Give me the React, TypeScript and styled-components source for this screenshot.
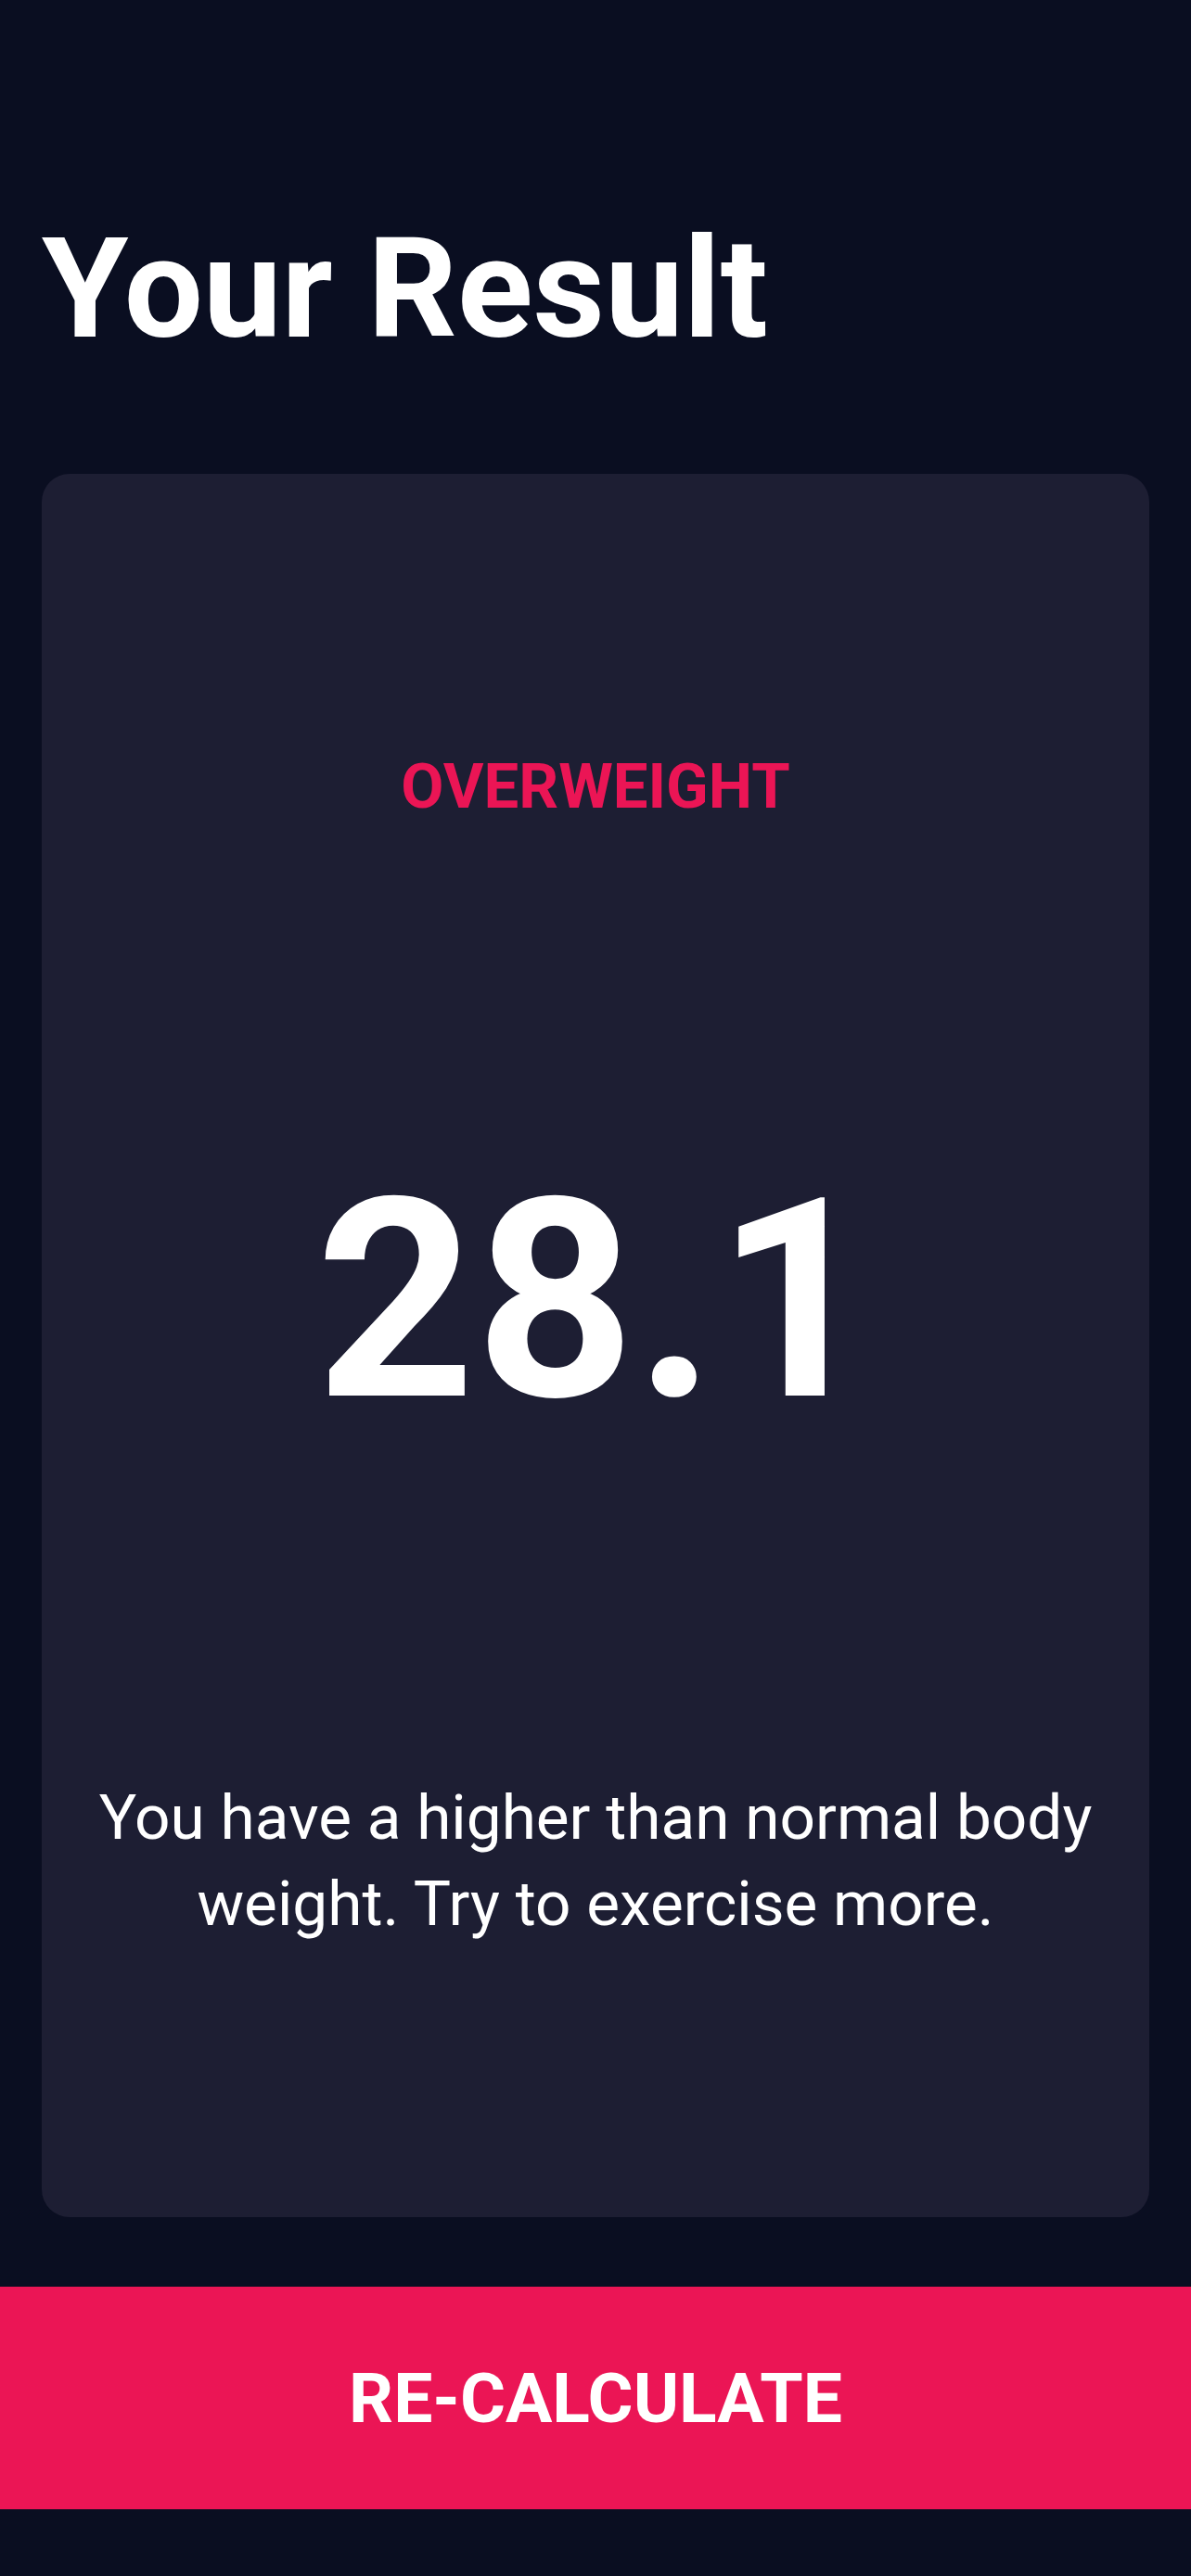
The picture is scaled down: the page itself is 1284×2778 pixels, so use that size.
import React from "react";
import styled, { createGlobalStyle } from "styled-components";

const GlobalStyle = createGlobalStyle`
  html, body {
    margin: 0;
    padding: 0;
    background: #0a0e21;
  }
  * { box-sizing: border-box; }
`;

const Page = styled.div`
  width: 1284px;
  min-height: 2778px;
  background: #0a0e21;
  display: flex;
  flex-direction: column;
  font-family: Roboto, "Liberation Sans", sans-serif;
  color: #ffffff;
`;

const Header = styled.header`
  padding: 222px 45px 0;
`;

const Title = styled.h1`
  margin: 0;
  font-size: 151px;
  line-height: 180px;
  font-weight: 700;
  color: #ffffff;
`;

const Card = styled.section`
  margin: 109px 45px 0;
  height: 1880px;
  background: #1d1e33;
  border-radius: 30px;
  display: flex;
  flex-direction: column;
  align-items: center;
  padding-top: 298px;
`;

const Status = styled.div<{ $color: string }>`
  font-size: 67px;
  line-height: 79px;
  font-weight: 700;
  color: ${(p) => p.$color};
`;

const Score = styled.div`
  margin-top: 335px;
  font-size: 300px;
  line-height: 360px;
  font-weight: 700;
  color: #ffffff;
`;

const Message = styled.p`
  margin: 330px 0 0;
  font-size: 67.5px;
  line-height: 93px;
  font-weight: 400;
  text-align: center;
  color: #ffffff;
  padding: 0 20px;
`;

const ActionButton = styled.button`
  margin-top: 75px;
  height: 240px;
  width: 100%;
  border: none;
  background: #eb1555;
  color: #ffffff;
  font-family: Roboto, "Liberation Sans", sans-serif;
  font-size: 75px;
  font-weight: 700;
  display: flex;
  align-items: center;
  justify-content: center;
  padding: 0;
  cursor: pointer;
`;

export default function App() {
  return (
    <>
      <GlobalStyle />
      <Page>
        <Header>
          <Title>Your Result</Title>
        </Header>
        <Card>
          <Status $color="#eb1555">OVERWEIGHT</Status>
          <Score>28.1</Score>
          <Message>
            You have a higher than normal body
            <br />
            weight. Try to exercise more.
          </Message>
        </Card>
        <ActionButton>RE-CALCULATE</ActionButton>
      </Page>
    </>
  );
}
